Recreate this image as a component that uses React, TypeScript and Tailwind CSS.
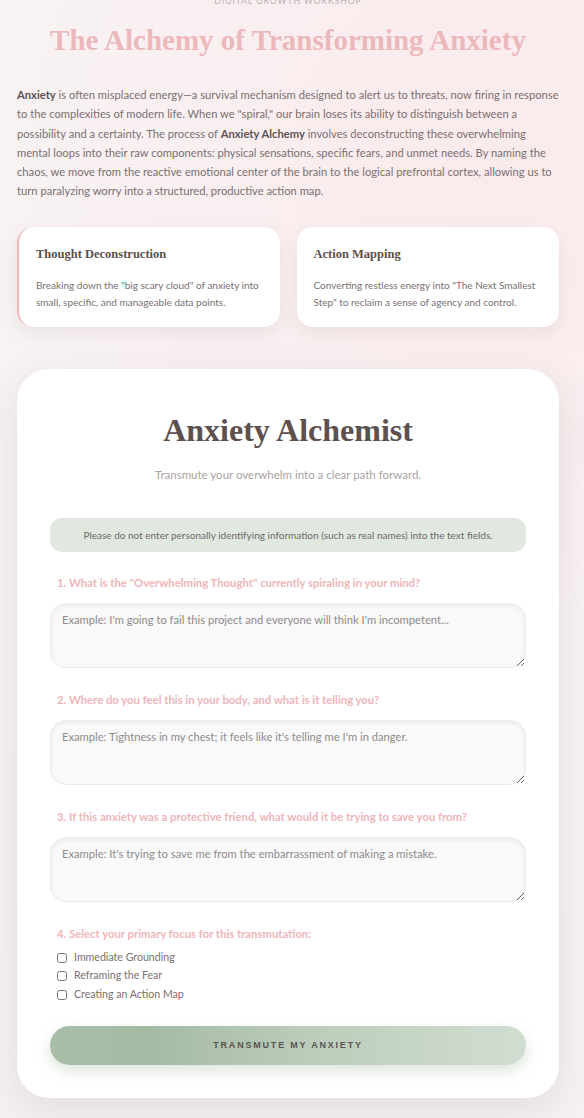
import React from "react";

const body = { fontFamily: "Lato, 'Noto Sans', sans-serif" };
const serif = { fontFamily: "'Liberation Serif', 'DejaVu Serif', serif" };

const questions = [
  {
    label: '1. What is the "Overwhelming Thought" currently spiraling in your mind?',
    placeholder: "Example: I'm going to fail this project and everyone will think I'm incompetent...",
  },
  {
    label: "2. Where do you feel this in your body, and what is it telling you?",
    placeholder: "Example: Tightness in my chest; it feels like it's telling me I'm in danger.",
  },
  {
    label: "3. If this anxiety was a protective friend, what would it be trying to save you from?",
    placeholder: "Example: It's trying to save me from the embarrassment of making a mistake.",
  },
];

const focusOptions = ["Immediate Grounding", "Reframing the Fear", "Creating an Action Map"];

export default function App() {
  return (
    <div
      className="min-h-screen bg-[#f8f2f3] bg-[radial-gradient(circle_at_85%_15%,#fbeaec_0%,#f8f2f3_45%,#f5f1f2_100%)] text-[#7a7071]"
      style={body}
    >
      <div className="ml-[17px] w-[542px] pb-5">
        {/* HEADER */}
        <p className="-mt-[5px] text-center text-[8.5px] uppercase tracking-[0.12em] text-[#b8b0b1]">
          Digital Growth Workshop
        </p>
        <h1
          className="mt-[14px] text-center text-[29px] font-bold leading-tight text-[#ecb8bb]"
          style={serif}
        >
          The Alchemy of Transforming Anxiety
        </h1>

        <p className="mt-[27px] text-[11.2px] leading-[19.3px]">
          <strong className="font-bold text-[#5d5253]">Anxiety</strong> is often misplaced energy—a
          survival mechanism designed to alert us to threats, now firing in response to the
          complexities of modern life. When we "spiral," our brain loses its ability to distinguish
          between a possibility and a certainty. The process of{" "}
          <strong className="font-bold text-[#5d5253]">Anxiety Alchemy</strong> involves
          deconstructing these overwhelming mental loops into their raw components: physical
          sensations, specific fears, and unmet needs. By naming the chaos, we move from the reactive
          emotional center of the brain to the logical prefrontal cortex, allowing us to turn
          paralyzing worry into a structured, productive action map.
        </p>

        {/* INFO CARDS */}
        <div className="mt-[26px] grid grid-cols-2 gap-[17px]">
          <div className="h-[100px] rounded-2xl border-l-2 border-[#ecb8bb] bg-white pr-[14px] pl-[17px] pt-[18px] shadow-[0_6px_18px_rgba(120,100,100,0.10)]">
            <h3 className="text-[12.5px] font-bold text-[#5d504d]" style={serif}>
              Thought Deconstruction
            </h3>
            <p className="mt-[13px] text-[10px] leading-[17px]">
              Breaking down the "big scary cloud" of anxiety into small, specific, and manageable
              data points.
            </p>
          </div>
          <div className="h-[100px] rounded-2xl bg-white pr-[14px] pl-[17px] pt-[18px] shadow-[0_6px_18px_rgba(120,100,100,0.10)]">
            <h3 className="text-[12.5px] font-bold text-[#5d504d]" style={serif}>
              Action Mapping
            </h3>
            <p className="mt-[13px] text-[10px] leading-[17px]">
              Converting restless energy into "The Next Smallest Step" to reclaim a sense of agency
              and control.
            </p>
          </div>
        </div>

        {/* ALCHEMIST TOOL */}
        <div className="mt-[42px] rounded-[32px] bg-white px-[33px] pt-[37px] pb-[33px] shadow-[0_12px_40px_rgba(90,70,70,0.12)]">
          <h2 className="text-center text-[32px] font-bold text-[#5d504d]" style={serif}>
            Anxiety Alchemist
          </h2>
          <p className="mt-[12px] text-center text-[11.5px] text-[#aaa3a4]">
            Transmute your overwhelm into a clear path forward.
          </p>

          <div className="mt-[35px] flex h-[34px] items-center justify-center rounded-xl bg-[#e1e8e0] text-[10px] text-[#6f6a6a]">
            Please do not enter personally identifying information (such as real names) into the
            text fields.
          </div>

          {questions.map((q, i) => (
            <div key={i} className={i === 0 ? "mt-[23px]" : "mt-[24px]"}>
              <label className="block pl-[7px] text-[11.3px] font-bold text-[#efb5b9]">
                {q.label}
              </label>
              <textarea
                placeholder={q.placeholder}
                className="mt-[11px] block h-[65px] w-full resize-y rounded-2xl border border-[#ececee] bg-[#f9f9fa] px-[11px] py-[8px] text-[11.2px] text-[#666] shadow-[inset_0_2px_4px_rgba(0,0,0,0.06)] outline-none placeholder:text-[#8f8a8b]"
                style={body}
              />
            </div>
          ))}

          <div className="mt-[24px] pl-[7px]">
            <p className="text-[11.3px] font-bold text-[#efb5b9]">
              4. Select your primary focus for this transmutation:
            </p>
            <div className="mt-[7px] flex flex-col gap-[3px]">
              {focusOptions.map((opt) => (
                <label
                  key={opt}
                  className="flex items-center gap-[7px] text-[10.6px] leading-[15.5px] text-[#7a7071]"
                >
                  <input
                    type="checkbox"
                    className="m-0 h-[10px] w-[10px] rounded-sm accent-[#a6bba6]"
                  />
                  {opt}
                </label>
              ))}
            </div>
          </div>

          <button
            className="mt-[24px] h-[39px] w-full rounded-full bg-[linear-gradient(90deg,#a9bea8_0%,#a4baa3_20%,#bccdbb_55%,#d2ddd1_100%)] text-[9px] font-bold uppercase tracking-[0.2em] text-[#5a5252] shadow-[0_6px_14px_rgba(120,150,120,0.25)]"
            style={{ fontFamily: "'Liberation Sans', Arial, sans-serif" }}
          >
            Transmute My Anxiety
          </button>
        </div>
      </div>
    </div>
  );
}
